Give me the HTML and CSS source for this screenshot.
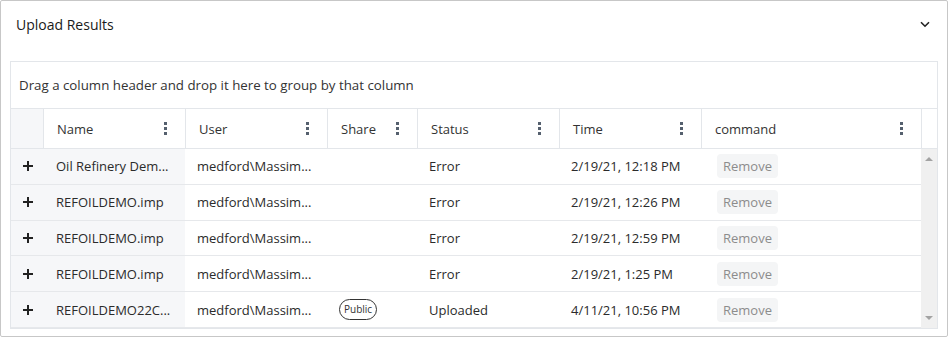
FILE: index.html
```html
<!DOCTYPE html>
<html lang="en">
<head>
  <meta charset="UTF-8" />
  <title>Upload Results</title>
  <link rel="stylesheet" href="styles.css">
</head>
<body>

<div class="panel">
  <div class="panel-head">
    <span class="panel-title">Upload Results</span>
    <svg class="chevron" width="10" height="7" viewBox="0 0 10 7"><path d="M1 1.2 L5 5.2 L9 1.2" fill="none" stroke="#222" stroke-width="1.6"/></svg>
  </div>

  <div class="panel-body">
    <div class="grid">
      <div class="group-panel">Drag a column header and drop it here to group by that column</div>

      <div class="grid-header">
        <div class="hcell expand-col"></div>
        <div class="hcell col-name">Name <span class="dots"><i></i><i></i><i></i></span></div>
        <div class="hcell col-user">User <span class="dots"><i></i><i></i><i></i></span></div>
        <div class="hcell col-share">Share <span class="dots"><i></i><i></i><i></i></span></div>
        <div class="hcell col-status">Status <span class="dots"><i></i><i></i><i></i></span></div>
        <div class="hcell col-time">Time <span class="dots"><i></i><i></i><i></i></span></div>
        <div class="hcell col-command">command <span class="dots"><i></i><i></i><i></i></span></div>
        <div class="hcell col-scroll"></div>
      </div>

      <div class="grid-body">
        <div class="rows" id="rows">
          <!-- rows filled by script -->
        </div>
        <div class="vscroll">
          <span class="arrow up"></span>
          <span class="arrow down"></span>
        </div>
      </div>
    </div>
  </div>
</div>

<script>
  const uploads = [
    { name: 'Oil Refinery Dem...', user: 'medford\\Massim...', share: '', status: 'Error', time: '2/19/21, 12:18 PM' },
    { name: 'REFOILDEMO.imp', user: 'medford\\Massim...', share: '', status: 'Error', time: '2/19/21, 12:26 PM' },
    { name: 'REFOILDEMO.imp', user: 'medford\\Massim...', share: '', status: 'Error', time: '2/19/21, 12:59 PM' },
    { name: 'REFOILDEMO.imp', user: 'medford\\Massim...', share: '', status: 'Error', time: '2/19/21, 1:25 PM' },
    { name: 'REFOILDEMO22C...', user: 'medford\\Massim...', share: 'Public', status: 'Uploaded', time: '4/11/21, 10:56 PM' }
  ];

  const rows = document.getElementById('rows');
  uploads.forEach(u => {
    const row = document.createElement('div');
    row.className = 'row';
    row.innerHTML = `
      <div class="cell expand-col"><svg width="10" height="10" viewBox="0 0 10 10"><rect x="0" y="4" width="10" height="2" fill="#222"/><rect x="4" y="0" width="2" height="10" fill="#222"/></svg></div>
      <div class="cell col-name"></div>
      <div class="cell col-user"></div>
      <div class="cell col-share"></div>
      <div class="cell col-status"></div>
      <div class="cell col-time"></div>
      <div class="cell col-command"><button class="remove-btn">Remove</button></div>`;
    row.querySelector('.col-name').textContent = u.name;
    row.querySelector('.col-user').textContent = u.user;
    row.querySelector('.col-status').textContent = u.status;
    row.querySelector('.col-time').textContent = u.time;
    if (u.share) {
      const badge = document.createElement('span');
      badge.className = 'badge';
      badge.textContent = u.share;
      row.querySelector('.col-share').appendChild(badge);
    }
    rows.appendChild(row);
  });
</script>

</body>
</html>
```

FILE: styles.css
```css
body {
  margin: 0;
  font-family: 'Open Sans', 'Noto Sans', sans-serif;
  font-size: 13px;
  color: #2b2b2b;
  background: #fff;
}

.panel {
  width: 946px;
  height: 335px;
  border: 1px solid #c7c7c7;
  border-radius: 2px;
  background: #fff;
}

.panel-head {
  height: 46px;
  padding: 0 17px 0 15px;
  display: flex;
  align-items: center;
  justify-content: space-between;
}

.panel-title {
  font-size: 14px;
  color: #1a1a1a;
}

.panel-body {
  padding: 14px 9px 0 9px;
}

.grid {
  border: 1px solid #e3e6ea;
}

.group-panel {
  height: 46px;
  line-height: 46px;
  padding-left: 8px;
  border-bottom: 1px solid #e3e6ea;
  font-size: 13.3px;
  color: #333;
}

.grid-header {
  display: flex;
  height: 39px;
  border-bottom: 1px solid #e3e6ea;
}

.hcell {
  display: flex;
  align-items: center;
  justify-content: space-between;
  padding: 0 18px 0 13px;
  border-left: 1px solid #e3e6ea;
  box-sizing: border-box;
  color: #333;
}

.hcell.expand-col {
  border-left: none;
  background: #f6f7f9;
}

.hcell.col-scroll {
  padding: 0;
}

.dots {
  display: flex;
  flex-direction: column;
  gap: 2px;
}

.dots i {
  display: block;
  width: 3px;
  height: 3px;
  background: #55606e;
}

.expand-col { width: 32px; }
.col-name { width: 142px; }
.col-user { width: 142px; }
.col-share { width: 90px; }
.col-status { width: 142px; }
.col-time { width: 142px; }
.col-command { width: 220px; }
.col-scroll { width: 16px; }

.grid-body {
  display: flex;
}

.rows {
  flex: 1;
}

.row {
  display: flex;
  height: 34.8px;
  border-bottom: 1px solid #e6e8eb;
}

.cell {
  display: flex;
  align-items: center;
  padding-left: 12px;
  box-sizing: border-box;
  white-space: nowrap;
  overflow: hidden;
}

.cell.expand-col {
  padding-left: 12px;
  background: #f6f7f9;
}

.cell.col-name {
  padding-left: 13px;
  background: #f6f7f9;
}

.cell.col-command {
  padding-left: 16px;
}

.remove-btn {
  font-family: inherit;
  font-size: 13px;
  color: #8c8c8c;
  background: #f4f5f6;
  border: none;
  border-radius: 4px;
  height: 24px;
  padding: 0 6px;
}

.badge {
  display: inline-block;
  border: 1px solid #333;
  border-radius: 11px;
  padding: 0 4px;
  height: 19px;
  line-height: 19px;
  font-size: 10px;
  color: #333;
}

.vscroll {
  width: 16px;
  height: 179px;
  background: #f0f0f0;
  position: relative;
}

.arrow {
  position: absolute;
  left: 4px;
  width: 0;
  height: 0;
  border-left: 4px solid transparent;
  border-right: 4px solid transparent;
}

.arrow.up {
  top: 8px;
  border-bottom: 4px solid #a3a3a3;
}

.arrow.down {
  bottom: 8px;
  border-top: 4px solid #a3a3a3;
}
```
